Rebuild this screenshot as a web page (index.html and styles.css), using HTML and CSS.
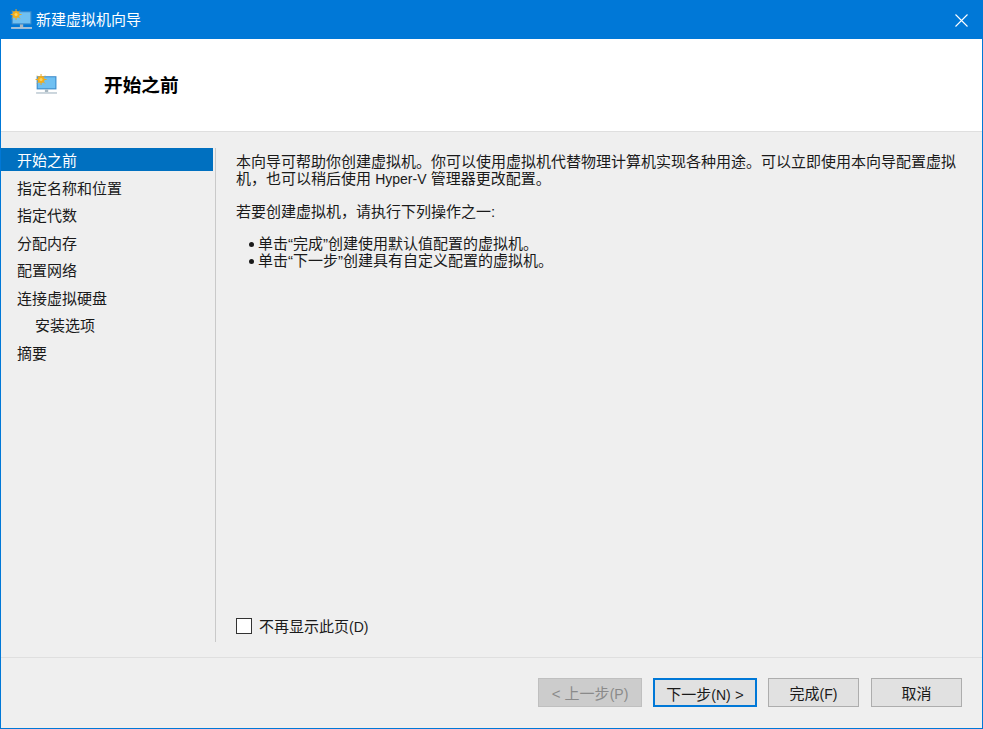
FILE: index.html
```html
<!DOCTYPE html>
<html lang="zh-CN">
<head>
<meta charset="utf-8">
<title>新建虚拟机向导</title>
<link rel="stylesheet" href="styles.css">
</head>
<body>
<svg class="defs" width="0" height="0">
  <symbol id="vm" viewBox="0 0 20 20">
    <rect x="1.5" y="2" width="18" height="12" fill="#3d8ccb"/>
    <rect x="2.5" y="3" width="16" height="10" fill="#6fc0f2"/>
    <path d="M5.5 0v10M.5 5h10M2 1.5l7 7M9 1.5l-7 7" stroke="#eda71c" stroke-width=".9"/>
    <circle cx="5.5" cy="5" r="3.2" fill="#f2ad1c"/>
    <circle cx="5.5" cy="5" r="1.4" fill="#fbd360"/>
    <rect x="9" y="14" width="3" height="2.5" fill="#a9b8c2"/>
    <rect x="1" y="16.5" width="19" height="1.5" fill="#c2ced6"/>
  </symbol>
</svg>
<div class="window">
  <header class="titlebar">
    <div class="title-left">
      <svg class="title-icon"><use href="#vm"/></svg>
      <span class="title-text">新建虚拟机向导</span>
    </div>
    <svg class="close" viewBox="0 0 13 13"><path d="M.5.5l12 12M12.5.5l-12 12" stroke="#fff" stroke-width="1.1" fill="none"/></svg>
  </header>
  <section class="banner">
    <svg class="banner-icon"><use href="#vm"/></svg>
    <h1 class="banner-title">开始之前</h1>
  </section>
  <main class="body">
    <nav class="nav">
      <div class="nav-item active">开始之前</div>
      <div class="nav-item">指定名称和位置</div>
      <div class="nav-item">指定代数</div>
      <div class="nav-item">分配内存</div>
      <div class="nav-item">配置网络</div>
      <div class="nav-item">连接虚拟硬盘</div>
      <div class="nav-item sub">安装选项</div>
      <div class="nav-item">摘要</div>
    </nav>
    <div class="content">
      <div class="copy">
        <p class="para">本向导可帮助你创建虚拟机。你可以使用虚拟机代替物理计算机实现各种用途。可以立即使用本向导配置虚拟机，也可以稍后使用 <span class="latin">Hyper-V</span> 管理器更改配置。</p>
        <p class="para tight">若要创建虚拟机，请执行下列操作之一:</p>
        <ul class="list">
          <li>单击“完成”创建使用默认值配置的虚拟机。</li>
          <li>单击“下一步”创建具有自定义配置的虚拟机。</li>
        </ul>
      </div>
      <label class="check"><span class="box"></span><span>不再显示此页<span class="latin">(D)</span></span></label>
    </div>
  </main>
  <footer class="footer">
    <button class="btn prev" disabled>&lt; 上一步<span class="latin">(P)</span></button>
    <button class="btn next">下一步<span class="latin">(N)</span> &gt;</button>
    <button class="btn finish">完成<span class="latin">(F)</span></button>
    <button class="btn cancel">取消</button>
  </footer>
</div>
</body>
</html>
```
FILE: styles.css
```css
* { box-sizing: border-box; }
html, body { margin: 0; padding: 0; height: 100%; }
body { font-family: "Liberation Sans", "Noto Sans CJK SC", sans-serif; font-size: 15px; color: #1a1a1a; overflow: hidden; }
.defs { position: absolute; }
.latin { font-size: 14px; line-height: 1; }
.window { width: 983px; height: 729px; border: 1px solid #0078d7; border-top: 0; background: #efefef; display: flex; flex-direction: column; }
.titlebar { height: 39px; margin: 0 -1px; background: #0078d7; display: flex; align-items: center; justify-content: space-between; padding: 0 15px 0 10px; flex: none; }
.title-left { display: flex; align-items: center; gap: 4px; }
.title-icon { width: 22px; height: 22px; }
.title-text { color: #fff; line-height: 20px; }
.close { width: 13px; height: 13px; margin-top: 2px; }
.banner { height: 93px; background: #fff; border-bottom: 1px solid #dfdfdf; display: flex; align-items: center; padding: 0 0 0 34px; flex: none; }
.banner-icon { width: 22px; height: 22px; margin-top: -1px; }
.banner-title { margin: 0 0 0 47px; font-size: 18.67px; font-weight: 700; color: #000; line-height: 24px; position: relative; top: 1px; }
.body { flex: 1; display: flex; min-height: 0; padding-top: 16px; padding-bottom: 15px; border-bottom: 1px solid #dfdfdf; }
.nav { width: 215px; border-right: 1px solid #c9c9c9; flex: none; }
.nav-item { height: 27.5px; padding-left: 16px; line-height: 25px; white-space: nowrap; }
.nav-item.active { height: 23px; line-height: 26px; margin: 0 2px 4.5px 0; background: #0070c0; color: #fff; }
.nav-item.sub { padding-left: 34px; }
.content { flex: 1; display: flex; flex-direction: column; justify-content: space-between; padding: 5px 24px 0 20px; min-width: 0; }
.copy { line-height: 17px; }
.para { margin: 0 0 16px; }
.para.tight { margin-bottom: 15px; }
.list { margin: 0; padding: 0 0 0 22px; list-style: none; }
.list li { position: relative; }
.list li::before { content: ""; position: absolute; left: -9px; top: 7px; width: 5px; height: 5px; border-radius: 50%; background: #1a1a1a; }
.check { display: flex; align-items: center; gap: 7px; margin-bottom: 5px; line-height: 20px; }
.box { width: 16px; height: 16px; border: 1px solid #333; background: #fff; margin-top: -2px; }
.footer { height: 70px; display: flex; align-items: flex-start; justify-content: flex-end; padding: 20px 20px 0 0; gap: 11px; flex: none; }
.btn { height: 29px; font: inherit; line-height: 25px; padding: 2px 0 0; border: 1px solid #adadad; background: #e1e1e1; color: #1a1a1a; }
.prev { width: 104px; background: #cccccc; border-color: #bfbfbf; color: #8a8a8a; }
.next { width: 104px; border: 2px solid #0078d7; }
.finish { width: 91px; }
.cancel { width: 91px; margin-left: 1px; }
```
